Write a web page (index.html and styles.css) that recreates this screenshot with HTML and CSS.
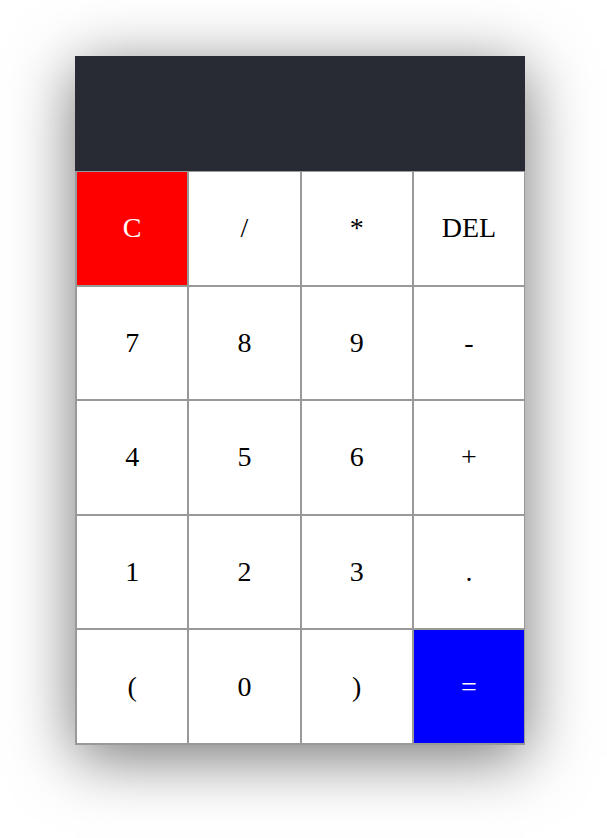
FILE: index.html
```html
<!DOCTYPE html>
<html>
<head>
<meta charset="utf-8">
<link rel="stylesheet" href="styles.css">
</head>
<body>
<div class="page">
  <div class="calculator">
    <div class="display"></div>
    <div class="keypad">
      <button class="key key-clear">C</button>
      <button class="key">/</button>
      <button class="key">*</button>
      <button class="key">DEL</button>
      <button class="key">7</button>
      <button class="key">8</button>
      <button class="key">9</button>
      <button class="key">-</button>
      <button class="key">4</button>
      <button class="key">5</button>
      <button class="key">6</button>
      <button class="key">+</button>
      <button class="key">1</button>
      <button class="key">2</button>
      <button class="key">3</button>
      <button class="key">.</button>
      <button class="key">(</button>
      <button class="key">0</button>
      <button class="key">)</button>
      <button class="key key-equals">=</button>
    </div>
  </div>
</div>
</body>
</html>
```
FILE: styles.css
```css
html, body {
  margin: 0;
  padding: 0;
  background: #ffffff;
}

.page {
  min-height: 838px;
  box-sizing: border-box;
  padding: 56px 0 0 75px;
}

.calculator {
  width: 450px;
  box-shadow: 0 12px 60px rgba(0, 0, 0, 0.55);
}

.display {
  height: 115px;
  background: #282b34;
}

.keypad {
  display: grid;
  grid-template-columns: repeat(4, 1fr);
  grid-auto-rows: 114.6px;
  border-left: 1px solid #999999;
  border-bottom: 1px solid #999999;
  background: #ffffff;
}

.key {
  margin: 0;
  padding: 0;
  border: 1px solid #999999;
  background: #ffffff;
  color: #000000;
  font-family: "Liberation Serif", "Times New Roman", serif;
  font-size: 28px;
  box-sizing: border-box;
  border-radius: 0;
}

.key-clear {
  background: #ff0000;
  color: #ffffff;
}

.key-equals {
  background: #0000ff;
  color: #ffffff;
}
```
